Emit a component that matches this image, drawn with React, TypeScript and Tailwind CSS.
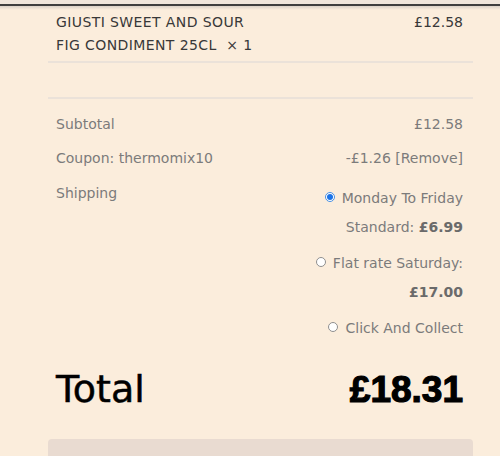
import React from "react";

function Radio({ checked }: { checked?: boolean }) {
  if (checked) {
    return (
      <span className="inline-flex items-center justify-center w-[10px] h-[10px] rounded-full border border-[#4a90e2] bg-white align-middle mr-[7px] relative top-[-2px]">
        <span className="w-[6px] h-[6px] rounded-full bg-[#1a73e8]" />
      </span>
    );
  }
  return (
    <span className="inline-block w-[10px] h-[10px] rounded-full border border-[#8f8f8f] bg-white align-middle mr-[7px] relative top-[-2px]" />
  );
}

export default function App() {
  return (
    <div className="w-[500px] h-[456px] overflow-hidden bg-[#fbeddc] font-['DejaVu_Sans',sans-serif]">
      <div className="h-[4px] bg-[#eee4da]" />
      <div className="h-[2px] bg-[#3d3d3d]" />
      <div className="h-[4px] bg-gradient-to-b from-[#d9d0c7] to-[#fbeddc]" />

      <div className="ml-[48px] w-[425px]">
        {/* product row */}
        <div className="flex justify-between pl-2 pr-[10px] pt-[1px] pb-[4px] border-b-2 border-[#ebe2d9] text-[14px] leading-[23px] text-[#383838]">
          <div className="tracking-[0.4px]">
            GIUSTI SWEET AND SOUR
            <br />
            FIG CONDIMENT 25CL&nbsp;&nbsp;× 1
          </div>
          <div>£12.58</div>
        </div>

        <div className="h-[36px] border-b-2 border-[#ebe2d9]" />

        {/* totals */}
        <div className="pt-[8px] text-[14px] leading-[22.4px] text-[#7b7b7b]">
          <div className="flex justify-between pl-2 pr-[10px] py-[6px]">
            <div>Subtotal</div>
            <div>£12.58</div>
          </div>
          <div className="flex justify-between pl-2 pr-[10px] py-[6px]">
            <div>Coupon: thermomix10</div>
            <div>-£1.26 [Remove]</div>
          </div>
          <div className="flex justify-between items-start pl-2 pr-[10px] py-[6px]">
            <div>Shipping</div>
            <ul className="mt-[2px] text-right leading-[29.5px] flex flex-col gap-[6px]">
              <li>
                <div>
                  <Radio checked />
                  Monday To Friday
                </div>
                <div>
                  Standard: <span className="font-bold text-[#6a6a6a]">£6.99</span>
                </div>
              </li>
              <li>
                <div>
                  <Radio />
                  Flat rate Saturday:
                </div>
                <div className="font-bold text-[#6a6a6a]">£17.00</div>
              </li>
              <li>
                <div>
                  <Radio />
                  Click And Collect
                </div>
              </li>
            </ul>
          </div>
        </div>

        {/* total */}
        <div className="h-[80px] flex items-center justify-between pl-2 pr-[10px] text-black">
          <div className="text-[38px] leading-[38px] [-webkit-text-stroke:0.5px_black]">Total</div>
          <div className="text-[37px] leading-[37px] font-bold font-['Liberation_Sans',sans-serif] [-webkit-text-stroke:1.2px_black]">
            £18.31
          </div>
        </div>

        <div className="mt-[10px] h-[40px] rounded-[4px] bg-[#e9dbd1]" />
      </div>
    </div>
  );
}
